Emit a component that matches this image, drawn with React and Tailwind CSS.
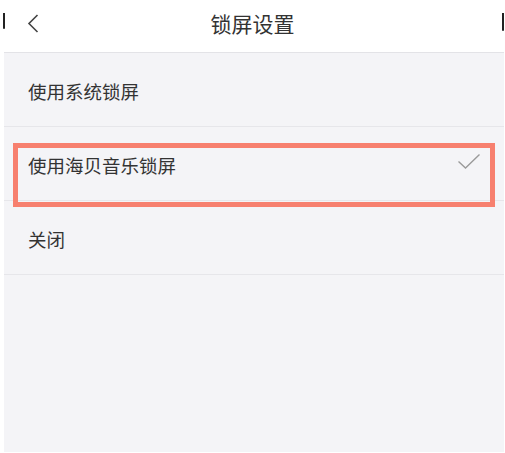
import React from 'react';

const font = { fontFamily: '"Noto Sans CJK SC", "Noto Sans", sans-serif' };

const options = [
  { id: 'system', label: '使用系统锁屏' },
  { id: 'haibei', label: '使用海贝音乐锁屏', checked: true },
  { id: 'off', label: '关闭' },
];

const App = () => {
  return (
    <div className="relative w-[505px] h-[453px] bg-white overflow-hidden" style={font}>
      {/* Header */}
      <div className="relative h-[52px] flex items-center justify-center bg-white">
        <span className="absolute left-[3px] top-[13px] w-[2px] h-[16px] bg-[#222] rounded-b-full" />
        <svg className="absolute left-[27px] top-[14px]" width="12" height="19" viewBox="0 0 12 19">
          <path d="M10.5 1 L2 9.5 L10.5 18" fill="none" stroke="#444" strokeWidth="1.6" />
        </svg>
        <h1 className="text-[21px] text-[#333] leading-none -mt-[6px]">锁屏设置</h1>
        <span className="absolute right-[1px] top-[13px] w-[2px] h-[18px] bg-[#222] rounded-b-full" />
      </div>

      {/* Options */}
      <div className="ml-[4px] mr-[1px] h-[400px] bg-[#f4f4f7] border-t border-[#e3e3e7]">
        {options.map((o) => (
          <div
            key={o.id}
            className="h-[74px] flex items-center justify-between pl-[24px] pr-[24px] border-b border-[#e6e6ea]"
          >
            <span className="text-[18.5px] text-[#333] leading-none mt-[3px]">{o.label}</span>
            {o.checked && (
              <svg width="24" height="17" viewBox="0 0 24 17" className="mt-[-4px] mr-[-1px]">
                <path d="M1.5 8.5 L8.5 15 L22.5 1.5" fill="none" stroke="#9a9a9a" strokeWidth="1.4" />
              </svg>
            )}
          </div>
        ))}
      </div>

      {/* Highlight annotation */}
      <div className="absolute left-[13px] top-[143px] w-[482px] h-[64px] border-[5px] border-[#f7806f] pointer-events-none" />
    </div>
  );
};

export default App;
